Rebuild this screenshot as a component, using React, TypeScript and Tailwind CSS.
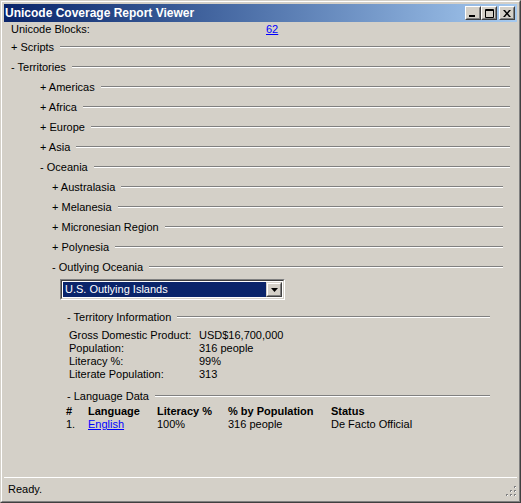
import React from "react";

const font = { fontFamily: '"Liberation Sans", Arial, sans-serif' };

function Sep() {
  return <div className="flex-1 h-[2px] border-t border-t-[#808080] border-b border-b-white ml-[6px]" />;
}

function Row({ label, pl = "", pr = "" }: { label: string; pl?: string; pr?: string }) {
  return (
    <div className={`flex items-center h-[20px] ${pl} ${pr}`}>
      <span className="whitespace-nowrap">{label}</span>
      <Sep />
    </div>
  );
}

function TitleButton({ children, ml = "" }: { children: React.ReactNode; ml?: string }) {
  return (
    <div className={`w-[16px] h-[14px] bg-[#d4d0c8] border border-t-white border-l-white border-r-[#404040] border-b-[#404040] ${ml}`}>
      <div className="w-full h-full border border-t-[#d4d0c8] border-l-[#d4d0c8] border-r-[#808080] border-b-[#808080] flex items-center justify-center">
        {children}
      </div>
    </div>
  );
}

export default function App() {
  return (
    <div
      className="w-[521px] h-[503px] bg-[#d4d0c8] border border-t-[#d4d0c8] border-l-[#d4d0c8] border-r-[#404040] border-b-[#404040] text-[11px] text-black"
      style={font}
    >
      <div className="w-full h-full border border-t-white border-l-white border-r-[#808080] border-b-[#808080] p-[2px] flex flex-col">
        {/* Title bar */}
        <div className="h-[18px] flex items-center bg-gradient-to-r from-[#0a246a] to-[#a6caf0] pl-[1px] pr-[2px]">
          <span className="text-white font-bold text-[12px] leading-none whitespace-nowrap flex-1">
            Unicode Coverage Report Viewer
          </span>
          <TitleButton>
            <svg width="8" height="7" viewBox="0 0 8 7"><rect x="0" y="5" width="6" height="2" fill="#000" /></svg>
          </TitleButton>
          <TitleButton>
            <svg width="9" height="9" viewBox="0 0 9 9"><path d="M0.5 0.5h8v8h-8z M0 1.5h9" stroke="#000" strokeWidth="1" fill="none" /></svg>
          </TitleButton>
          <TitleButton ml="ml-[2px]">
            <svg width="8" height="7" viewBox="0 0 8 7">
              <path d="M0 0h2l2 2.5l2-2.5h2l-3 3.5l3 3.5h-2l-2-2.5l-2 2.5h-2l3-3.5z" fill="#000" />
            </svg>
          </TitleButton>
        </div>

        {/* Content */}
        <div className="flex-1 flex flex-col pl-[7px] pr-[7px]">
          <div className="h-[15px] flex items-center">
            <span className="w-[255px]">Unicode Blocks:</span>
            <span className="text-[#0000ff] underline">62</span>
          </div>
          <Row label="+ Scripts" />
          <Row label="- Territories" />
          <div className="flex flex-col pl-[29px]">
            <Row label="+ Americas" />
            <Row label="+ Africa" />
            <Row label="+ Europe" />
            <Row label="+ Asia" />
            <Row label="- Oceania" />
            <div className="flex flex-col pl-[12px] pr-[7px]">
              <Row label="+ Australasia" />
              <Row label="+ Melanesia" />
              <Row label="+ Micronesian Region" />
              <Row label="+ Polynesia" />
              <Row label="- Outlying Oceania" />
              {/* dropdown */}
              <div className="ml-[8px] mt-[2px] w-[225px] h-[21px] border border-t-[#808080] border-l-[#808080] border-b-white border-r-white">
                <div className="w-full h-full border border-t-[#404040] border-l-[#404040] border-b-[#d4d0c8] border-r-[#d4d0c8] bg-white flex p-[1px]">
                  <div className="flex-1 bg-[#0a246a] text-white flex items-center pl-[2px] text-[11px]">
                    U.S. Outlying Islands
                  </div>
                  <div className="w-[16px] h-full bg-[#d4d0c8] border border-t-[#d4d0c8] border-l-[#d4d0c8] border-r-[#404040] border-b-[#404040]">
                    <div className="w-full h-full border border-t-white border-l-white border-r-[#808080] border-b-[#808080] flex items-center justify-center">
                      <svg width="7" height="4" viewBox="0 0 7 4"><path d="M0 0h7l-3.5 4z" fill="#000" /></svg>
                    </div>
                  </div>
                </div>
              </div>

              <div className="flex flex-col pl-[15px] pr-[13px] mt-[7px]">
                <Row label="- Territory Information" />
                <div className="grid grid-cols-[130px_1fr] pl-[2px] mt-[2px] leading-[13px]">
                  <span>Gross Domestic Product:</span>
                  <span>USD$16,700,000</span>
                  <span>Population:</span>
                  <span>316 people</span>
                  <span>Literacy %:</span>
                  <span>99%</span>
                  <span>Literate Population:</span>
                  <span>313</span>
                </div>
                <div className="flex items-center h-[16px] mt-[7px]">
                  <span className="whitespace-nowrap">- Language Data</span>
                  <Sep />
                </div>
                <div className="grid grid-cols-[22px_69px_71px_103px_1fr] leading-[13px] -ml-[1px] mt-[1px]">
                  <span className="font-bold">#</span>
                  <span className="font-bold">Language</span>
                  <span className="font-bold">Literacy %</span>
                  <span className="font-bold">% by Population</span>
                  <span className="font-bold">Status</span>
                  <span>1.</span>
                  <span className="text-[#0000ff] underline">English</span>
                  <span>100%</span>
                  <span>316 people</span>
                  <span>De Facto Official</span>
                </div>
              </div>
            </div>
          </div>
        </div>

        {/* Status bar */}
        <div className="h-[22px] border-t border-t-white flex items-center pl-[4px] pt-[1px] relative">
          <span>Ready.</span>
          <svg className="absolute right-0 bottom-[2px]" width="12" height="12" viewBox="0 0 12 12">
            <rect x="9" y="1" width="2" height="2" fill="#808080" />
            <rect x="5" y="5" width="2" height="2" fill="#808080" />
            <rect x="9" y="5" width="2" height="2" fill="#808080" />
            <rect x="1" y="9" width="2" height="2" fill="#808080" />
            <rect x="5" y="9" width="2" height="2" fill="#808080" />
            <rect x="9" y="9" width="2" height="2" fill="#808080" />
            <rect x="10" y="2" width="1" height="1" fill="#fff" />
            <rect x="6" y="6" width="1" height="1" fill="#fff" />
            <rect x="10" y="6" width="1" height="1" fill="#fff" />
            <rect x="2" y="10" width="1" height="1" fill="#fff" />
            <rect x="6" y="10" width="1" height="1" fill="#fff" />
            <rect x="10" y="10" width="1" height="1" fill="#fff" />
          </svg>
        </div>
      </div>
    </div>
  );
}
